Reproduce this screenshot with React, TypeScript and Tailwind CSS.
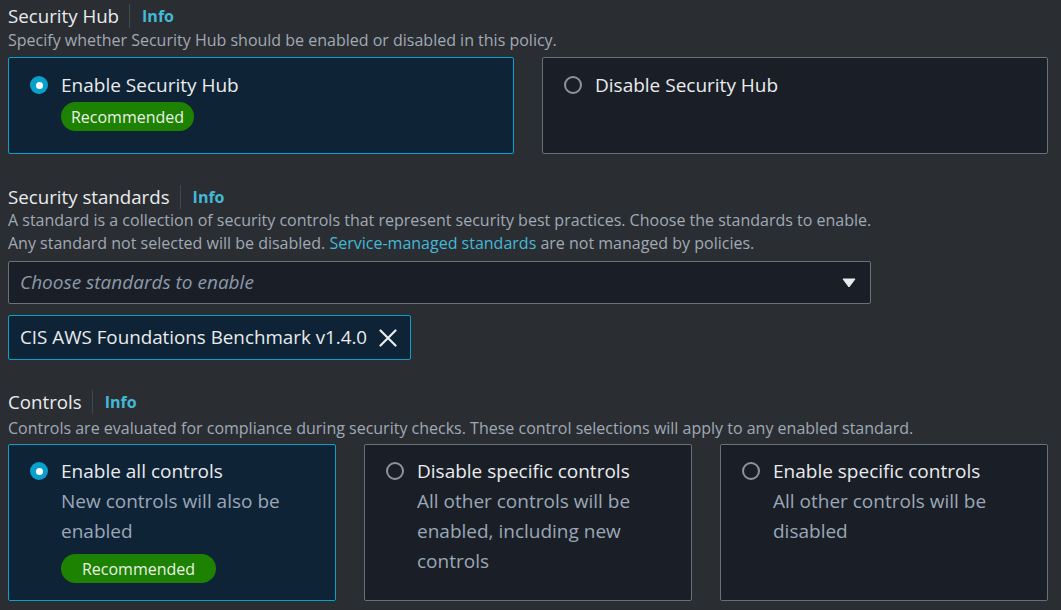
const font = { fontFamily: '"Open Sans", "Noto Sans", sans-serif' };

function Radio({ checked }: { checked: boolean }) {
  return checked ? (
    <span className="mt-[6px] flex h-[18px] w-[18px] shrink-0 items-center justify-center rounded-full bg-[#0aa0cc]">
      <span className="h-[7px] w-[7px] rounded-full bg-white" />
    </span>
  ) : (
    <span className="mt-[6px] h-[18px] w-[18px] shrink-0 rounded-full border-2 border-[#8a949e]" />
  );
}

function Badge({ wide }: { wide?: boolean }) {
  return (
    <span
      className={
        'inline-flex h-[29px] items-center justify-center rounded-full bg-[#1d8102] text-[16px] text-[#eaf2e8] ' +
        (wide ? 'w-[155px]' : 'w-[133px]')
      }
    >
      Recommended
    </span>
  );
}

function Heading({ title }: { title: string }) {
  return (
    <div className="flex h-[32px] items-center">
      <span className="text-[18.7px] text-[#e9ebed]">{title}</span>
      <span className="ml-[10px] mr-[12px] h-[24px] w-px bg-[#414750]" />
      <span className="text-[16px] font-bold text-[#44b9d6]">Info</span>
    </div>
  );
}

function Card({
  checked,
  title,
  lines,
  badge,
  badgeWide,
  className,
}: {
  checked: boolean;
  title: string;
  lines?: string[];
  badge?: boolean;
  badgeWide?: boolean;
  className?: string;
}) {
  return (
    <div
      className={
        'flex gap-[13px] rounded-[2px] border pl-[21px] ' +
        (checked ? 'border-[#0aa0cc] bg-[#0f2336] ' : 'border-[#687078] bg-[#1a1f27] ') +
        (className ?? '')
      }
    >
      <Radio checked={checked} />
      <div className="flex flex-col">
        <span className="text-[19px] leading-[30px] text-[#e9ebed]">{title}</span>
        {lines?.map((l) => (
          <span key={l} className="text-[19px] leading-[30px] text-[#9ba7b6]">
            {l}
          </span>
        ))}
        {badge && (
          <div className={badgeWide ? 'mt-[8px]' : 'mt-[2px]'}>
            <Badge wide={badgeWide} />
          </div>
        )}
      </div>
    </div>
  );
}

export default function App() {
  return (
    <div className="min-h-screen w-[1061px] bg-[#2a2e33] px-[8px]" style={font}>
      {/* Security Hub */}
      <Heading title="Security Hub" />
      <p className="text-[16px] leading-[17px] text-[#a1a9b3]">
        Specify whether Security Hub should be enabled or disabled in this policy.
      </p>
      <div className="mt-[8px] grid grid-cols-2 gap-[28px] pr-[5px]">
        <Card checked title="Enable Security Hub" badge className="h-[97px] pt-[12px]" />
        <Card checked={false} title="Disable Security Hub" className="h-[97px] pt-[12px]" />
      </div>

      {/* Security standards */}
      <div className="mt-[27px]">
        <Heading title="Security standards" />
      </div>
      <p className="-mt-[4px] text-[16px] leading-[23px] text-[#a1a9b3]">
        A standard is a collection of security controls that represent security best practices. Choose the
        standards to enable.
        <br />
        Any standard not selected will be disabled.{' '}
        <span className="text-[#44b9d6]">Service-managed standards</span> are not managed by policies.
      </p>
      <div className="mt-[6px] flex h-[43px] w-[863px] items-center justify-between rounded-[2px] border border-[#687078] bg-[#1a1f27] pl-[11px] pr-[14px]">
        <span className="text-[19px] italic text-[#8d99a8]">Choose standards to enable</span>
        <svg width="14" height="10" viewBox="0 0 14 10">
          <path d="M1 1h12L7 9z" fill="#e9ebed" stroke="#e9ebed" strokeLinejoin="round" />
        </svg>
      </div>
      <div className="mt-[11px] inline-flex h-[45px] items-center gap-[12px] rounded-[2px] border border-[#0aa0cc] bg-[#0f2336] pl-[11px] pr-[13px]">
        <span className="text-[18.8px] text-[#e9ebed]">CIS AWS Foundations Benchmark v1.4.0</span>
        <svg width="18" height="18" viewBox="0 0 18 18">
          <path d="M1.5 1.5l15 15M16.5 1.5l-15 15" stroke="#e9ebed" strokeWidth="2.2" strokeLinecap="round" />
        </svg>
      </div>

      {/* Controls */}
      <div className="mt-[26px]">
        <Heading title="Controls" />
      </div>
      <p className="text-[16px] leading-[20px] text-[#a1a9b3]">
        Controls are evaluated for compliance during security checks. These control selections will apply to any
        enabled standard.
      </p>
      <div className="mt-[6px] grid grid-cols-3 gap-[28px] pr-[5px]">
        <Card
          checked
          title="Enable all controls"
          lines={['New controls will also be', 'enabled']}
          badge
          badgeWide
          className="h-[157px] pt-[11px]"
        />
        <Card
          checked={false}
          title="Disable specific controls"
          lines={['All other controls will be', 'enabled, including new', 'controls']}
          className="h-[157px] pt-[11px]"
        />
        <Card
          checked={false}
          title="Enable specific controls"
          lines={['All other controls will be', 'disabled']}
          className="h-[157px] pt-[11px]"
        />
      </div>
    </div>
  );
}
